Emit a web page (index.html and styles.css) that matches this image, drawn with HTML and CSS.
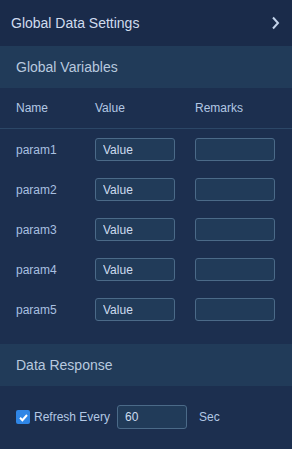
FILE: index.html
```html
<!DOCTYPE html>
<html lang="en">
  <head>
    <meta charset="UTF-8" />
    <meta name="viewport" content="width=device-width, initial-scale=1.0" />
    <title>Global Data Settings</title>
    <link rel="stylesheet" href="styles.css">
  </head>
  <body>
    <div class="panel">
      <div class="panel-header">
        <span>Global Data Settings</span>
        <svg class="chevron" width="9" height="14" viewBox="0 0 9 14">
          <path d="M2 1.5 L7 7 L2 12.5" fill="none" stroke="#c3d3ea" stroke-width="2" />
        </svg>
      </div>

      <div class="section-title">Global Variables</div>

      <div class="vars-head">
        <span>Name</span>
        <span>Value</span>
        <span>Remarks</span>
      </div>

      <div class="vars-body">
        <div class="var-row">
          <label for="p1">param1</label>
          <input type="text" id="p1" value="Value" />
          <input type="text" />
        </div>
        <div class="var-row">
          <label for="p2">param2</label>
          <input type="text" id="p2" value="Value" />
          <input type="text" />
        </div>
        <div class="var-row">
          <label for="p3">param3</label>
          <input type="text" id="p3" value="Value" />
          <input type="text" />
        </div>
        <div class="var-row">
          <label for="p4">param4</label>
          <input type="text" id="p4" value="Value" />
          <input type="text" />
        </div>
        <div class="var-row">
          <label for="p5">param5</label>
          <input type="text" id="p5" value="Value" />
          <input type="text" />
        </div>
      </div>

      <div class="section-title">Data Response</div>

      <div class="refresh">
        <label class="check">
          <span class="box">
            <svg width="13" height="13" viewBox="0 0 13 13">
              <path d="M3 6.8 L5.4 9.2 L10 4" fill="none" stroke="#fff" stroke-width="2" />
            </svg>
          </span>
          Refresh Every
        </label>
        <input type="text" class="secs" value="60" />
        <span>Sec</span>
      </div>
    </div>
  </body>
</html>
```

FILE: styles.css
```css
* {
  box-sizing: border-box;
  margin: 0;
  padding: 0;
}

body {
  font-family: "Liberation Sans", Arial, sans-serif;
  background: #1c2f4f;
  color: #b3c8e4;
  min-height: 100vh;
}

.panel-header {
  height: 46px;
  padding: 0 12px 0 11px;
  display: flex;
  align-items: center;
  justify-content: space-between;
  background: #1a2b4a;
  color: #d0dcee;
  font-size: 14px;
}

.section-title {
  height: 42px;
  padding-left: 16px;
  display: flex;
  align-items: center;
  background: #213b59;
  color: #b8c9df;
  font-size: 14px;
}

.vars-head,
.var-row {
  display: grid;
  grid-template-columns: 79px 100px 80px;
  align-items: center;
  padding-left: 16px;
  font-size: 12px;
}

.vars-head {
  height: 41px;
  border-bottom: 1px solid #2c4767;
}

.vars-body {
  display: flex;
  flex-direction: column;
  gap: 17px;
  padding: 9px 0 23px;
}

.var-row label {
  color: #a9c0e1;
}

input {
  width: 80px;
  height: 23px;
  padding: 0 7px;
  background: #213b59;
  border: 1px solid #4b6a88;
  border-radius: 3px;
  color: #cddbee;
  font-family: inherit;
  font-size: 12px;
  outline: none;
}

.refresh {
  display: flex;
  align-items: center;
  padding: 19px 0 0 16px;
  font-size: 12px;
}

.check {
  display: flex;
  align-items: center;
  gap: 4px;
  color: #b3c8e4;
}

.box {
  width: 14px;
  height: 14px;
  border-radius: 2px;
  background: #2f86e6;
  display: flex;
  align-items: center;
  justify-content: center;
}

.secs {
  width: 70px;
  height: 24px;
  margin: 0 12px 0 7px;
}
```
